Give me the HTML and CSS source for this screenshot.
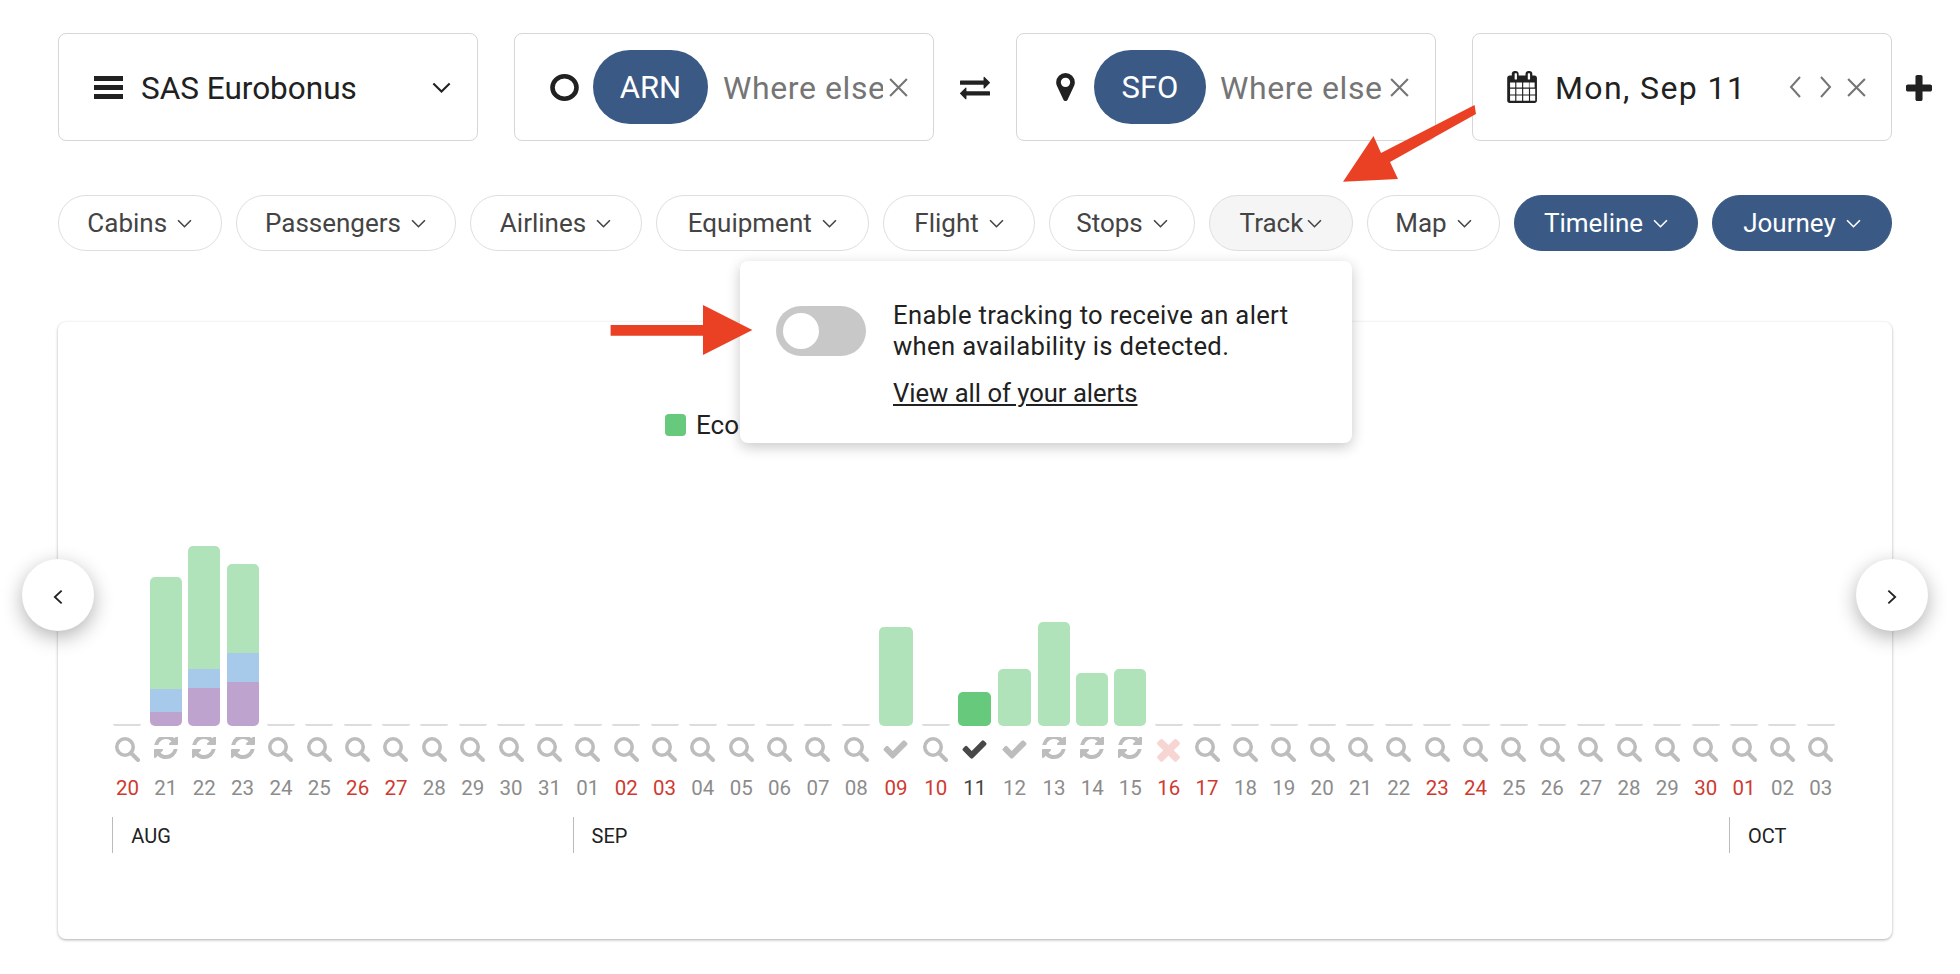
FILE: index.html
```html
<!DOCTYPE html>
<html lang="en">

<head>
    <meta charset="UTF-8">
    <title>Availability timeline</title>
    <link rel="stylesheet" href="styles.css">
</head>

<body>
    <svg class="defs" width="0" height="0">
        <symbol id="i-search" viewBox="0 0 25 25"><circle cx="10" cy="10" r="8.2" fill="none" stroke="currentColor" stroke-width="3.6"/><path d="M16 16l7 7" fill="none" stroke="currentColor" stroke-width="4" stroke-linecap="round"/></symbol>
        <symbol id="i-refresh" viewBox="0 128 1536 1536"><path fill="currentColor" d="M1511 928q0 5-1 7-64 268-268 434.5t-478 166.5q-146 0-282.5-55t-243.5-157l-129 129q-19 19-45 19t-45-19-19-45v-448q0-26 19-45t45-19h448q26 0 45 19t19 45-19 45l-137 137q71 66 161 102t187 36q134 0 250-65t186-179q11-17 53-117 8-23 30-23h192q13 0 22.5 9.5t9.5 22.5zm25-800v448q0 26-19 45t-45 19h-448q-26 0-45-19t-19-45 19-45l138-138q-148-137-349-137-134 0-250 65t-186 179q-11 17-53 117-8 23-30 23h-199q-13 0-22.5-9.5t-9.5-22.5v-7q65-268 270-434.5t480-166.5q146 0 284 55.5t245 156.5l130-129q19-19 45-19t45 19 19 45z"/></symbol>
        <symbol id="i-check" viewBox="90 124 1612 1612"><path fill="currentColor" d="M1671 566q0 40-28 68l-724 724-136 136q-28 28-68 28t-68-28l-136-136-362-362q-28-28-28-68t28-68l136-136q28-28 68-28t68 28l294 295 656-657q28-28 68-28t68 28l136 136q28 28 28 68z"/></symbol>
        <symbol id="i-times" viewBox="246 268 1300 1300"><path fill="currentColor" d="M1490 1322q0 40-28 68l-136 136q-28 28-68 28t-68-28l-294-294-294 294q-28 28-68 28t-68-28l-136-136q-28-28-28-68t28-68l294-294-294-294q-28-28-28-68t28-68l136-136q28-28 68-28t68 28l294 294 294-294q28-28 68-28t68 28l136 136q28 28 28 68t-28 68l-294 294 294 294q28 28 28 68z"/></symbol>
        <symbol id="i-chev" viewBox="0 0 14 8"><path d="M1 1l6 6 6-6" fill="none" stroke="currentColor" stroke-width="1.5"/></symbol>
        <symbol id="i-close" viewBox="0 0 20 20"><path d="M2 2l16 16M18 2L2 18" fill="none" stroke="currentColor" stroke-width="2"/></symbol>
    </svg>

    <div class="page">
        <div class="top-row">
            <div class="box box-program">
                <svg class="ico-bars" viewBox="0 0 29 23"><path d="M0 0h29v5H0zM0 9h29v5H0zM0 18h29v5H0z" fill="#212121"/></svg>
                <span class="box-text">SAS Eurobonus</span>
                <svg class="ico-chev-lg"><use href="#i-chev"/></svg>
            </div>
            <div class="box box-place">
                <svg class="ico-ring" viewBox="0 0 29 27"><ellipse cx="14.5" cy="13.5" rx="12" ry="11.2" fill="none" stroke="#212121" stroke-width="4.6"/></svg>
                <span class="code">ARN</span>
                <span class="where">Where else to?</span>
                <svg class="ico-close"><use href="#i-close"/></svg>
            </div>
            <div class="swap">
                <svg viewBox="0 0 1792 1792"><path fill="#212121" d="M1792 1184v192q0 13-9.5 22.5t-22.5 9.5h-1376v192q0 13-9.5 22.5t-22.5 9.5q-12 0-24-10l-319-320q-9-9-9-22 0-14 9-23l320-320q9-9 23-9 13 0 22.5 9.5t9.5 22.5v192h1376q13 0 22.5 9.5t9.5 22.5zm0-544q0 14-9 23l-320 320q-9 9-23 9-13 0-22.5-9.5t-9.5-22.5v-192h-1376q-13 0-22.5-9.5t-9.5-22.5v-192q0-13 9.5-22.5t22.5-9.5h1376v-192q0-14 9-23t23-9q12 0 24 10l319 319q9 9 9 23z"/></svg>
            </div>
            <div class="box box-place box-dest">
                <svg class="ico-pin" viewBox="0 128 1024 1536"><path fill="#212121" d="M768 640q0-106-75-181t-181-75-181 75-75 181 75 181 181 75 181-75 75-181zm256 0q0 109-33 179l-364 774q-16 33-47.5 52t-67.5 19-67.5-19-46.5-52l-365-774q-33-70-33-179 0-212 150-362t362-150 362 150 150 362z"/></svg>
                <span class="code">SFO</span>
                <span class="where">Where else to?</span>
                <svg class="ico-close"><use href="#i-close"/></svg>
            </div>
            <div class="box box-date">
                <svg class="ico-cal" viewBox="0 0 1664 1792"><path fill="#212121" d="M192 1664h288v-288h-288v288zm352 0h320v-288h-320v288zm-352-352h288v-320h-288v320zm352 0h320v-320h-320v320zm-352-384h288v-288h-288v288zm736 736h320v-288h-320v288zm-384-736h320v-288h-320v288zm768 736h288v-288h-288v288zm-384-352h320v-320h-320v320zm-352-864v-288q0-13-9.5-22.5t-22.5-9.5h-64q-13 0-22.5 9.5t-9.5 22.5v288q0 13 9.5 22.5t22.5 9.5h64q13 0 22.5-9.5t9.5-22.5zm736 864h288v-320h-288v320zm-384-384h320v-288h-320v288zm352 0h288v-288h-288v288zm32-480v-288q0-13-9.5-22.5t-22.5-9.5h-64q-13 0-22.5 9.5t-9.5 22.5v288q0 13 9.5 22.5t22.5 9.5h64q13 0 22.5-9.5t9.5-22.5zm384-64v1280q0 52-38 90t-90 38h-1408q-52 0-90-38t-38-90v-1280q0-52 38-90t90-38h128v-96q0-66 47-113t113-47h64q66 0 113 47t47 113v96h384v-96q0-66 47-113t113-47h64q66 0 113 47t47 113v96h128q52 0 90 38t38 90z"/></svg>
                <span class="box-text box-text-date">Mon, Sep 11</span>
                <svg class="ico-step" viewBox="0 0 13 24"><path d="M11 2L2 12l9 10" fill="none" stroke="#757575" stroke-width="2"/></svg>
                <svg class="ico-step ico-step-next" viewBox="0 0 13 24"><path d="M2 2l9 10-9 10" fill="none" stroke="#757575" stroke-width="2"/></svg>
                <svg class="ico-close"><use href="#i-close"/></svg>
            </div>
            <svg class="ico-plus" viewBox="192 128 1408 1408"><path fill="#212121" d="M1600 736v192q0 40-28 68t-68 28h-416v416q0 40-28 68t-68 28h-192q-40 0-68-28t-28-68v-416h-416q-40 0-68-28t-28-68v-192q0-40 28-68t68-28h416v-416q0-40 28-68t68-28h192q40 0 68 28t28 68v416h416q40 0 68 28t28 68z"/></svg>
        </div>

        <div class="filter-row">
            <div class="pill">Cabins<svg><use href="#i-chev"/></svg></div>
            <div class="pill">Passengers<svg><use href="#i-chev"/></svg></div>
            <div class="pill">Airlines<svg><use href="#i-chev"/></svg></div>
            <div class="pill">Equipment<svg><use href="#i-chev"/></svg></div>
            <div class="pill">Flight<svg><use href="#i-chev"/></svg></div>
            <div class="pill">Stops<svg><use href="#i-chev"/></svg></div>
            <div class="pill pill-open">Track<svg><use href="#i-chev"/></svg></div>
            <div class="pill">Map<svg><use href="#i-chev"/></svg></div>
            <div class="pill pill-on">Timeline<svg><use href="#i-chev"/></svg></div>
            <div class="pill pill-on">Journey<svg><use href="#i-chev"/></svg></div>
        </div>

        <div class="card">
            <div class="legend"><span class="swatch"></span>Economy</div>

            <div class="days">
                <div class="day"><div class="bars"><i class="stub"></i></div><svg class="st"><use href="#i-search"/></svg><span class="num red">20</span></div>
                <div class="day"><div class="bars"><div class="bar"><i class="g" style="height:112px"></i><i class="b" style="height:23px"></i><i class="p" style="height:14px"></i></div></div><svg class="st st-r"><use href="#i-refresh"/></svg><span class="num">21</span></div>
                <div class="day"><div class="bars"><div class="bar"><i class="g" style="height:123px"></i><i class="b" style="height:19px"></i><i class="p" style="height:38px"></i></div></div><svg class="st st-r"><use href="#i-refresh"/></svg><span class="num">22</span></div>
                <div class="day"><div class="bars"><div class="bar"><i class="g" style="height:89px"></i><i class="b" style="height:29px"></i><i class="p" style="height:44px"></i></div></div><svg class="st st-r"><use href="#i-refresh"/></svg><span class="num">23</span></div>
                <div class="day"><div class="bars"><i class="stub"></i></div><svg class="st"><use href="#i-search"/></svg><span class="num">24</span></div>
                <div class="day"><div class="bars"><i class="stub"></i></div><svg class="st"><use href="#i-search"/></svg><span class="num">25</span></div>
                <div class="day"><div class="bars"><i class="stub"></i></div><svg class="st"><use href="#i-search"/></svg><span class="num red">26</span></div>
                <div class="day"><div class="bars"><i class="stub"></i></div><svg class="st"><use href="#i-search"/></svg><span class="num red">27</span></div>
                <div class="day"><div class="bars"><i class="stub"></i></div><svg class="st"><use href="#i-search"/></svg><span class="num">28</span></div>
                <div class="day"><div class="bars"><i class="stub"></i></div><svg class="st"><use href="#i-search"/></svg><span class="num">29</span></div>
                <div class="day"><div class="bars"><i class="stub"></i></div><svg class="st"><use href="#i-search"/></svg><span class="num">30</span></div>
                <div class="day"><div class="bars"><i class="stub"></i></div><svg class="st"><use href="#i-search"/></svg><span class="num">31</span></div>
                <div class="day"><div class="bars"><i class="stub"></i></div><svg class="st"><use href="#i-search"/></svg><span class="num">01</span></div>
                <div class="day"><div class="bars"><i class="stub"></i></div><svg class="st"><use href="#i-search"/></svg><span class="num red">02</span></div>
                <div class="day"><div class="bars"><i class="stub"></i></div><svg class="st"><use href="#i-search"/></svg><span class="num red">03</span></div>
                <div class="day"><div class="bars"><i class="stub"></i></div><svg class="st"><use href="#i-search"/></svg><span class="num">04</span></div>
                <div class="day"><div class="bars"><i class="stub"></i></div><svg class="st"><use href="#i-search"/></svg><span class="num">05</span></div>
                <div class="day"><div class="bars"><i class="stub"></i></div><svg class="st"><use href="#i-search"/></svg><span class="num">06</span></div>
                <div class="day"><div class="bars"><i class="stub"></i></div><svg class="st"><use href="#i-search"/></svg><span class="num">07</span></div>
                <div class="day"><div class="bars"><i class="stub"></i></div><svg class="st"><use href="#i-search"/></svg><span class="num">08</span></div>
                <div class="day"><div class="bars"><div class="bar bar-wide"><i class="g" style="height:99px"></i></div></div><svg class="st st-c"><use href="#i-check"/></svg><span class="num red">09</span></div>
                <div class="day"><div class="bars"><i class="stub"></i></div><svg class="st"><use href="#i-search"/></svg><span class="num red">10</span></div>
                <div class="day day-now"><div class="bars"><div class="bar bar-wide"><i class="g" style="height:34px"></i></div></div><svg class="st st-c"><use href="#i-check"/></svg><span class="num">11</span></div>
                <div class="day"><div class="bars"><div class="bar bar-wide"><i class="g" style="height:57px"></i></div></div><svg class="st st-c"><use href="#i-check"/></svg><span class="num">12</span></div>
                <div class="day"><div class="bars"><div class="bar"><i class="g" style="height:104px"></i></div></div><svg class="st st-r"><use href="#i-refresh"/></svg><span class="num">13</span></div>
                <div class="day"><div class="bars"><div class="bar"><i class="g" style="height:53px"></i></div></div><svg class="st st-r"><use href="#i-refresh"/></svg><span class="num">14</span></div>
                <div class="day"><div class="bars"><div class="bar"><i class="g" style="height:57px"></i></div></div><svg class="st st-r"><use href="#i-refresh"/></svg><span class="num">15</span></div>
                <div class="day"><div class="bars"><i class="stub"></i></div><svg class="st st-x"><use href="#i-times"/></svg><span class="num red">16</span></div>
                <div class="day"><div class="bars"><i class="stub"></i></div><svg class="st"><use href="#i-search"/></svg><span class="num red">17</span></div>
                <div class="day"><div class="bars"><i class="stub"></i></div><svg class="st"><use href="#i-search"/></svg><span class="num">18</span></div>
                <div class="day"><div class="bars"><i class="stub"></i></div><svg class="st"><use href="#i-search"/></svg><span class="num">19</span></div>
                <div class="day"><div class="bars"><i class="stub"></i></div><svg class="st"><use href="#i-search"/></svg><span class="num">20</span></div>
                <div class="day"><div class="bars"><i class="stub"></i></div><svg class="st"><use href="#i-search"/></svg><span class="num">21</span></div>
                <div class="day"><div class="bars"><i class="stub"></i></div><svg class="st"><use href="#i-search"/></svg><span class="num">22</span></div>
                <div class="day"><div class="bars"><i class="stub"></i></div><svg class="st"><use href="#i-search"/></svg><span class="num red">23</span></div>
                <div class="day"><div class="bars"><i class="stub"></i></div><svg class="st"><use href="#i-search"/></svg><span class="num red">24</span></div>
                <div class="day"><div class="bars"><i class="stub"></i></div><svg class="st"><use href="#i-search"/></svg><span class="num">25</span></div>
                <div class="day"><div class="bars"><i class="stub"></i></div><svg class="st"><use href="#i-search"/></svg><span class="num">26</span></div>
                <div class="day"><div class="bars"><i class="stub"></i></div><svg class="st"><use href="#i-search"/></svg><span class="num">27</span></div>
                <div class="day"><div class="bars"><i class="stub"></i></div><svg class="st"><use href="#i-search"/></svg><span class="num">28</span></div>
                <div class="day"><div class="bars"><i class="stub"></i></div><svg class="st"><use href="#i-search"/></svg><span class="num">29</span></div>
                <div class="day"><div class="bars"><i class="stub"></i></div><svg class="st"><use href="#i-search"/></svg><span class="num red">30</span></div>
                <div class="day"><div class="bars"><i class="stub"></i></div><svg class="st"><use href="#i-search"/></svg><span class="num red">01</span></div>
                <div class="day"><div class="bars"><i class="stub"></i></div><svg class="st"><use href="#i-search"/></svg><span class="num">02</span></div>
                <div class="day"><div class="bars"><i class="stub"></i></div><svg class="st"><use href="#i-search"/></svg><span class="num">03</span></div>
            </div>

            <div class="months">
                <div class="month month-aug">AUG</div>
                <div class="month month-sep">SEP</div>
                <div class="month month-oct">OCT</div>
            </div>

            <button class="nav nav-prev"><svg viewBox="0 0 11 17"><path d="M9.5 1.5l-7.5 7 7.5 7" fill="none" stroke="#212121" stroke-width="2"/></svg></button>
            <button class="nav nav-next"><svg viewBox="0 0 11 17"><path d="M1.5 1.5l7.5 7-7.5 7" fill="none" stroke="#212121" stroke-width="2"/></svg></button>
        </div>

        <div class="popover">
            <div class="toggle"><span class="knob"></span></div>
            <div class="popover-text">
                <p>Enable tracking to receive an alert when availability is detected.</p>
                <a href="#">View all of your alerts</a>
            </div>
        </div>

        <!-- annotation arrows drawn over the screenshot -->
        <svg class="arrows" viewBox="0 0 1960 974">
            <path fill="#ea4125" d="M1474.6 105L1476 114 1390 162 1398 179 1343 181.7 1373.5 136 1381 153z"/>
            <path fill="#ea4125" d="M610.6 325H703V305L752.4 330 703 355V335.7H610.6z"/>
        </svg>
    </div>
</body>

</html>
```

FILE: styles.css
```css
* {
    padding: 0;
    margin: 0;
    box-sizing: border-box;
}

body {
    background: #fff;
    color: #212121;
    font-family: Roboto, "Liberation Sans", sans-serif;
}

.defs {
    position: absolute;
}

.page {
    position: relative;
    width: 1960px;
    height: 974px;
    padding: 33px 0 0 58px;
    overflow: hidden;
}

/* top row */
.top-row {
    display: flex;
    align-items: flex-start;
    height: 108px;
}

.box {
    display: flex;
    align-items: center;
    flex: none;
    width: 420px;
    height: 108px;
    border: 1px solid #d6d6d6;
    border-radius: 8px;
    background: #fff;
}

.box-text {
    padding-top: 2px;
    font-size: 31.5px;
}

.box-text-date {
    font-size: 32px;
    letter-spacing: 1.4px;
}

.box-program {
    padding-left: 35px;
}

.ico-bars {
    width: 29px;
    height: 23px;
    margin-right: 18px;
}

.ico-chev-lg {
    width: 19px;
    height: 11px;
    margin-left: auto;
    margin-right: 26px;
}

.box-place {
    margin-left: 36px;
    padding-left: 35px;
}

.box-dest {
    margin-left: 0;
    padding-left: 38px;
}

.ico-ring {
    width: 29px;
    height: 27px;
    margin-right: 14px;
}

.ico-pin {
    width: 21px;
    height: 28px;
    margin-right: 18px;
}

.code {
    flex: none;
    width: 115px;
    height: 74px;
    border-radius: 37px;
    background: #3a5a85;
    color: #fff;
    font-size: 31px;
    line-height: 76px;
    text-align: center;
}

.box-dest .code {
    width: 112px;
}

/* the placeholder is cut off by the narrow input, as in the real field */
.where {
    flex: none;
    width: 160px;
    margin-left: 15px;
    padding-top: 2px;
    overflow: hidden;
    white-space: nowrap;
    color: #757575;
    font-size: 32px;
    letter-spacing: 0.6px;
}

.box-dest .where {
    width: 164px;
    margin-left: 14px;
}

.ico-close {
    flex: none;
    width: 21px;
    height: 21px;
    margin-left: 5px;
    color: #757575;
}

.swap {
    display: flex;
    justify-content: center;
    flex: none;
    width: 82px;
    padding-top: 39px;
}

.swap svg {
    width: 30px;
    height: 30px;
}

.box-date {
    width: 419.5px;
    margin-left: 36px;
    padding-left: 33px;
}

.ico-cal {
    width: 31px;
    height: 32px;
    margin-right: 18px;
}

.ico-step {
    width: 13px;
    height: 24px;
    margin-left: auto;
}

.ico-step-next {
    margin-left: 17px;
}

.box-date .ico-close {
    margin-left: 14px;
    margin-right: 24px;
}

.ico-plus {
    flex: none;
    width: 26px;
    height: 26px;
    margin: 42px 0 0 14px;
}

/* filter pills */
.filter-row {
    display: grid;
    grid-template-columns: 163.5px 220px 172px 213.5px 152px 146px 144px 133px 184px 180px;
    column-gap: 14px;
    width: 1834px;
    margin-top: 54px;
}

.pill {
    display: flex;
    align-items: center;
    justify-content: center;
    gap: 10px;
    height: 56px;
    border: 1px solid #dedede;
    border-radius: 28px;
    color: #444;
    font-size: 26px;
}

.pill svg {
    width: 15px;
    height: 9px;
}

.pill-open {
    background: #f5f5f5;
    gap: 4px;
}

.pill-on {
    border-color: #3a5a85;
    background: #3a5a85;
    color: #fff;
}

/* chart card */
.card {
    position: relative;
    width: 1834px;
    height: 617px;
    margin-top: 71px;
    padding: 92px 0 0 50.3px;
    border-radius: 8px;
    background: #fff;
    box-shadow: 0 1px 3px rgba(0, 0, 0, 0.32);
}

.legend {
    display: flex;
    align-items: center;
    height: 22px;
    margin-left: 556.7px;
    font-size: 26px;
}

.swatch {
    width: 21px;
    height: 22px;
    margin-right: 10px;
    border-radius: 4px;
    background: #66c97b;
}

.days,
.months {
    display: grid;
    grid-template-columns: repeat(20, 38.37px) 41px 38.5px 39.5px 40px 39px 37.5px 38.5px 38.4px repeat(17, 38.37px);
}

.days {
    margin-top: 90px;
}

.day {
    display: flex;
    flex-direction: column;
    align-items: center;
}

.bars {
    display: flex;
    align-items: flex-end;
    justify-content: center;
    height: 200px;
    width: 100%;
}

.stub {
    display: block;
    width: 28px;
    height: 2px;
    border-radius: 0 0 2px 2px;
    background: #dcdcdc;
}

.bar {
    flex: none;
    width: 32px;
    border-radius: 5px;
    overflow: hidden;
}

.bar-wide {
    width: 33.5px;
}

.bar i {
    display: block;
}

.g {
    background: #b1e3ba;
}

.b {
    background: #a7c9ea;
}

.p {
    background: #bfa3cf;
}

.day-now .g {
    background: #66c97b;
}

.st {
    flex: none;
    width: 25px;
    height: 25px;
    margin-top: 11px;
    color: #bdbdbd;
}

.st-r {
    width: 24px;
    height: 24px;
    margin-bottom: 1px;
}

.st-x {
    color: #f6d5d3;
}

.day-now .st {
    color: #484848;
}

.num {
    height: 24px;
    margin-top: 14px;
    color: #8c8c8c;
    font-size: 20.5px;
    line-height: 24px;
}

.num.red {
    color: #cf3a30;
}

.day-now .num {
    color: #444;
}

.months {
    margin-top: 17px;
}

.month {
    height: 36px;
    margin-left: 4px;
    padding-left: 18px;
    border-left: 1px solid #bbb;
    font-size: 20px;
    line-height: 38px;
}

.month-aug {
    grid-column: span 12;
}

.month-sep {
    grid-column: span 30;
}

.month-oct {
    grid-column: span 3;
}

.nav {
    position: absolute;
    top: 237px;
    display: flex;
    align-items: center;
    justify-content: center;
    width: 72px;
    height: 72px;
    padding-top: 4px;
    border: 0;
    border-radius: 50%;
    background: #fff;
    box-shadow: 0 6px 20px rgba(0, 0, 0, 0.3);
}

.nav svg {
    width: 10px;
    height: 16px;
}

.nav-prev {
    left: -36px;
}

.nav-next {
    right: -36px;
}

/* track popover */
.popover {
    position: absolute;
    top: 261px;
    left: 740px;
    display: flex;
    align-items: flex-start;
    gap: 27px;
    width: 612px;
    height: 182px;
    padding: 39px 0 0 36px;
    border-radius: 8px;
    background: #fff;
    box-shadow: 0 4px 14px rgba(0, 0, 0, 0.22);
}

.toggle {
    flex: none;
    display: flex;
    align-items: center;
    width: 90px;
    height: 50px;
    margin-top: 6px;
    padding-left: 7px;
    border-radius: 25px;
    background: #c8c8c8;
}

.knob {
    width: 36px;
    height: 36px;
    border-radius: 50%;
    background: #fff;
}

.popover-text {
    width: 420px;
    font-size: 25.6px;
    line-height: 31px;
}

.popover-text p {
    letter-spacing: 0.35px;
}

.popover-text a {
    display: block;
    margin-top: 16px;
    color: #212121;
}

.arrows {
    position: absolute;
    top: 0;
    left: 0;
    width: 1960px;
    height: 974px;
    pointer-events: none;
}
```
